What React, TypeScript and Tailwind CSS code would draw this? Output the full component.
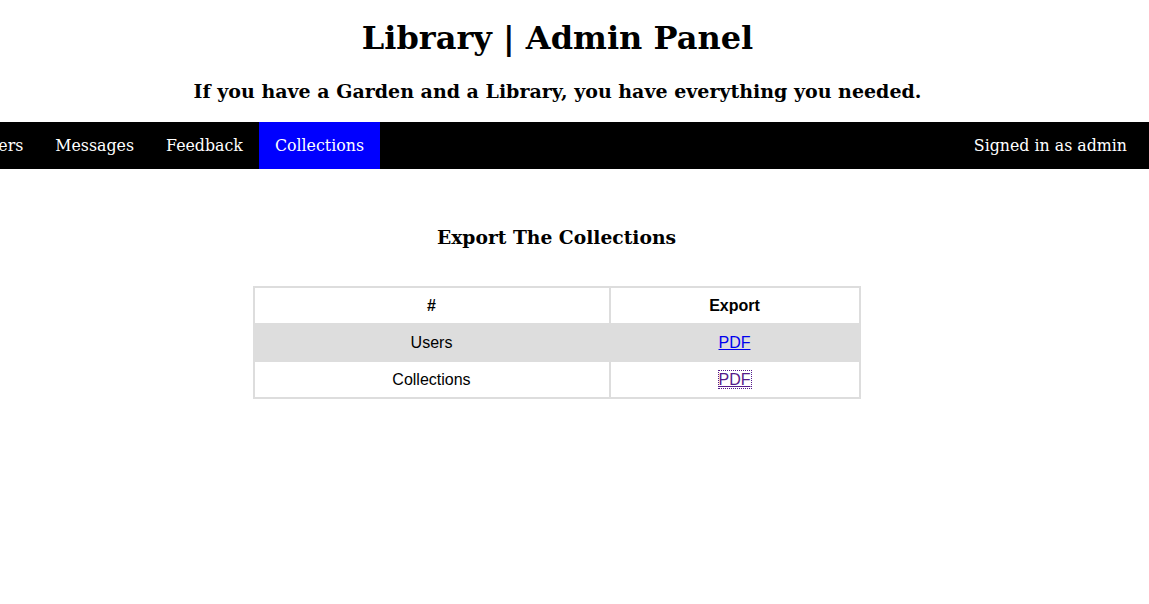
const navItems = ["Home", "Books", "Users", "Messages", "Feedback"];

const rows = [
  { name: "Users", visited: false },
  { name: "Collections", visited: true },
];

export default function App() {
  return (
    <div className="min-h-screen bg-white text-black">
      <header className="w-[1115px] text-center font-['DejaVu_Serif',serif]">
        <h1 className="pt-[20px] text-[32px] font-bold leading-[37px]">Library | Admin Panel</h1>
        <h3 className="mt-[23px] text-[19px] font-bold leading-[22px]">
          If you have a Garden and a Library, you have everything you needed.
        </h3>
      </header>

      <nav className="mt-[20px] flex items-stretch justify-between bg-black font-['DejaVu_Serif',serif] text-[15.8px] leading-[19px] text-white">
        <div className="flex w-[380px] shrink-0 justify-end overflow-hidden">
          {navItems.map((item) => (
            <a key={item} className="shrink-0 px-4 py-[14px] whitespace-nowrap">
              {item}
            </a>
          ))}
          <a className="shrink-0 bg-[#0000ff] px-4 py-[14px] whitespace-nowrap">Collections</a>
        </div>
        <a className="mr-[6px] px-4 py-[14px] whitespace-nowrap">Signed in as admin</a>
      </nav>

      <main className="w-[1113px]">
        <h3 className="mt-[57px] text-center font-['DejaVu_Serif',serif] text-[18.72px] font-bold leading-[22px]">
          Export The Collections
        </h3>

        <table className="mx-auto mt-[38px] w-[608px] border-collapse border-2 border-[#dddddd] font-['Liberation_Sans',Arial,sans-serif] text-[16px] leading-[19px]">
          <thead>
            <tr>
              <th className="w-[356px] border-2 border-[#dddddd] px-2 py-2 text-center font-bold">#</th>
              <th className="border-2 border-[#dddddd] px-2 py-2 text-center font-bold">Export</th>
            </tr>
          </thead>
          <tbody>
            {rows.map((row, i) => (
              <tr key={row.name} className={i % 2 === 0 ? "bg-[#dddddd]" : "bg-white"}>
                <td className="border-2 border-[#dddddd] px-2 py-2 text-center">{row.name}</td>
                <td className="border-2 border-[#dddddd] px-2 py-2 text-center">
                  <a
                    href="#"
                    className={
                      row.visited
                        ? "text-[#551a8b] underline outline-1 outline-dotted outline-[#551a8b]"
                        : "text-[#0000ee] underline"
                    }
                  >
                    PDF
                  </a>
                </td>
              </tr>
            ))}
          </tbody>
        </table>
      </main>
    </div>
  );
}
